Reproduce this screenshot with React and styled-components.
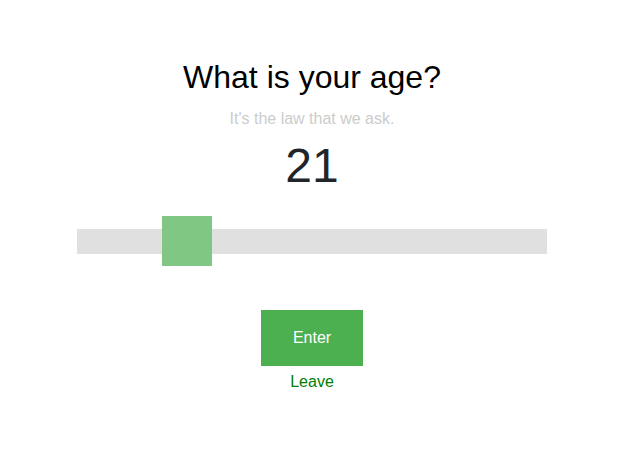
import React, { useState } from "react";
import styled, { createGlobalStyle } from "styled-components";

const GlobalStyle = createGlobalStyle`
  body {
    margin: 0;
    background: #fff;
    font-family: "Liberation Sans", Arial, sans-serif;
  }
`;

const Page = styled.div`
  padding: 59px 6px 0 0;
`;

const Wrapper = styled.div`
  width: 470px;
  margin: 0 auto;
  display: flex;
  flex-direction: column;
  align-items: center;
`;

const Title = styled.h1`
  margin: 0;
  font-size: 32px;
  line-height: 36px;
  font-weight: 400;
  color: #000;
`;

const Subtitle = styled.p`
  margin: 15px 0 0;
  font-size: 16px;
  line-height: 18px;
  color: #cccccc;
`;

const Age = styled.div`
  margin-top: 10px;
  font-size: 48px;
  line-height: 56px;
  color: #212529;
`;

const Slider = styled.input`
  -webkit-appearance: none;
  appearance: none;
  display: block;
  width: 100%;
  height: 50px;
  margin: 22px 0 0;
  padding: 0;
  background: transparent;
  outline: none;
  cursor: pointer;

  &::-webkit-slider-runnable-track {
    height: 25px;
    background: #e0e0e0;
    border: none;
  }

  &::-webkit-slider-thumb {
    -webkit-appearance: none;
    appearance: none;
    width: 50px;
    height: 50px;
    margin-top: -12.5px;
    background: #81c784;
    border: none;
    border-radius: 0;
  }
`;

const Button = styled.button`
  margin-top: 44px;
  width: 102px;
  height: 56px;
  border: none;
  background-color: #4caf50;
  color: #fff;
  font-family: inherit;
  font-size: 16px;
  cursor: pointer;
`;

const Leave = styled.a`
  margin-top: 7px;
  font-size: 16px;
  line-height: 18px;
  color: #008000;
  text-decoration: none;
  cursor: pointer;
`;

const App = () => {
  const [age, setAge] = useState(21);

  return (
    <Page>
      <GlobalStyle />
      <Wrapper>
        <Title>What is your age?</Title>
        <Subtitle>It's the law that we ask.</Subtitle>
        <Age>{age}</Age>
        <Slider
          type="range"
          min={1}
          max={100}
          value={age}
          onChange={(e) => setAge(Number(e.target.value))}
        />
        <Button>Enter</Button>
        <Leave>Leave</Leave>
      </Wrapper>
    </Page>
  );
};

export default App;
